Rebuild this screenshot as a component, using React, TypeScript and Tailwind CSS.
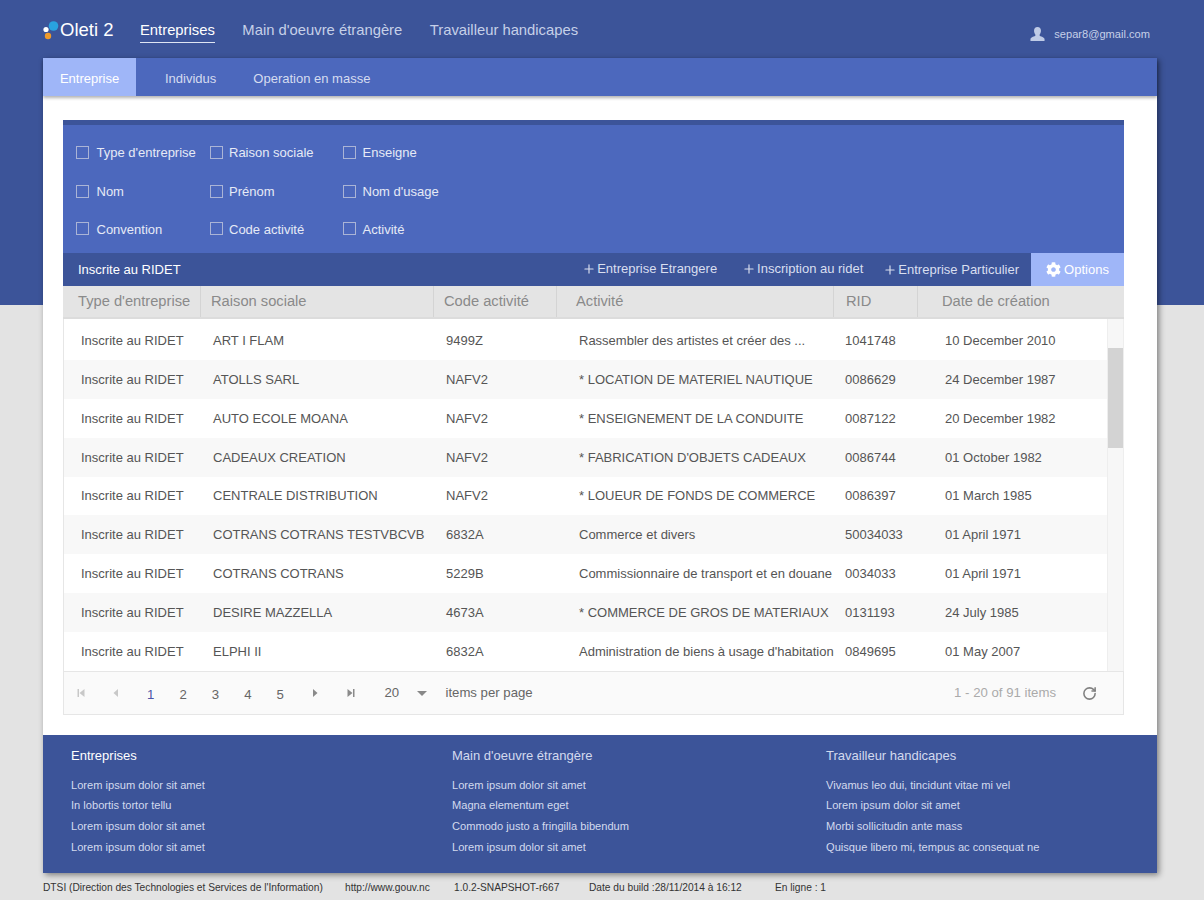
import { Plus, RotateCw } from "lucide-react";
import { FaCog } from "react-icons/fa";

const rows = [
  ["ART I FLAM", "9499Z", "Rassembler des artistes et créer des ...", "1041748", "10 December 2010"],
  ["ATOLLS SARL", "NAFV2", "* LOCATION DE MATERIEL NAUTIQUE", "0086629", "24 December 1987"],
  ["AUTO ECOLE MOANA", "NAFV2", "* ENSEIGNEMENT DE LA CONDUITE", "0087122", "20 December 1982"],
  ["CADEAUX CREATION", "NAFV2", "* FABRICATION D'OBJETS CADEAUX", "0086744", "01 October 1982"],
  ["CENTRALE DISTRIBUTION", "NAFV2", "* LOUEUR DE FONDS DE COMMERCE", "0086397", "01 March 1985"],
  ["COTRANS COTRANS TESTVBCVB", "6832A", "Commerce et divers", "50034033", "01 April 1971"],
  ["COTRANS COTRANS", "5229B", "Commissionnaire de transport et en douane", "0034033", "01 April 1971"],
  ["DESIRE MAZZELLA", "4673A", "* COMMERCE DE GROS DE MATERIAUX", "0131193", "24 July 1985"],
  ["ELPHI II", "6832A", "Administration de biens à usage d'habitation", "0849695", "01 May 2007"],
];

const filters = [
  ["Type d'entreprise", "Raison sociale", "Enseigne"],
  ["Nom", "Prénom", "Nom d'usage"],
  ["Convention", "Code activité", "Activité"],
];

const footer = [
  { title: "Entreprises", links: ["Lorem ipsum dolor sit amet", "In lobortis tortor tellu", "Lorem ipsum dolor sit amet", "Lorem ipsum dolor sit amet"] },
  { title: "Main d'oeuvre étrangère", links: ["Lorem ipsum dolor sit amet", "Magna elementum eget", "Commodo justo a fringilla bibendum", "Lorem ipsum dolor sit amet"] },
  { title: "Travailleur handicapes", links: ["Vivamus leo dui, tincidunt vitae mi vel", "Lorem ipsum dolor sit amet", "Morbi sollicitudin ante mass", "Quisque libero mi, tempus ac consequat ne"] },
];

function Logo() {
  return (
    <svg width="18" height="20" viewBox="0 0 18 20" className="shrink-0">
      <circle cx="10.5" cy="6" r="4.8" fill="#29a3e0" />
      <circle cx="3" cy="9.5" r="2.6" fill="#ffffff" />
      <circle cx="5" cy="16" r="3.2" fill="#ef9a2c" />
    </svg>
  );
}

function UserIcon() {
  return (
    <svg width="15" height="16" viewBox="0 0 16 16" className="shrink-0">
      <path d="M8 0.5c2.4 0 3.7 1.8 3.7 4.1 0 1.6-.6 3-1.4 3.8v1.5c.5.6 4.7 1.3 5.2 3.4v2.2H.5v-2.2c.5-2.1 4.7-2.8 5.2-3.400V8.400C4.900 7.600 4.300 6.200 4.300 4.600 4.300 2.300 5.600.5 8 .5z" fill="#bfcbe6" />
    </svg>
  );
}

function Pager({ d, color = "#8a8a8a" }: { d: string; color?: string }) {
  return (
    <svg width="10" height="10" viewBox="0 0 10 10">
      <path d={d} fill={color} />
    </svg>
  );
}

export default function App() {
  return (
    <div className="h-[900px] overflow-hidden bg-[linear-gradient(#3c5499_305px,#e3e3e3_305px)] font-['Liberation_Sans',Arial,sans-serif]">
      <div className="w-[1114px] ml-[43px]">
        <header className="h-[58px] flex items-start text-[#c6d0e8]">
          <div className="flex items-center mt-[17px] w-[97px]">
            <Logo />
            <span className="text-[18.5px] leading-6 text-white -ml-px mt-[1px]">Oleti 2</span>
          </div>
          <nav className="flex gap-[27.500px] mt-[18px] text-[14.800px] leading-6">
            <span className="text-white border-b border-[#dfe5f3] h-[25px]">Entreprises</span>
            <span>Main d'oeuvre étrangère</span>
            <span>Travailleur handicapes</span>
          </nav>
          <div className="ml-auto mr-[7px] mt-[26px] flex items-center gap-[9px] text-[11.100px] leading-4">
            <UserIcon />
            <span>separ8@gmail.com</span>
          </div>
        </header>

        <div className="shadow-[2px_2px_6px_rgba(0,0,0,0.45)]">
          <div className="relative h-[38px] bg-[#4c68bd] flex text-[13px] text-[#d5dcf0] shadow-[0_2px_3px_rgba(0,0,0,0.3)]">
            <div className="w-[93px] bg-[#9fb6f8] text-white flex items-center justify-center pt-[3px]">Entreprise</div>
            <div className="flex items-center ml-[29px] pt-[3px]">Individus</div>
            <div className="flex items-center ml-[37px] pt-[3px]">Operation en masse</div>
          </div>

          <main className="bg-white pl-5 pr-[33px] pt-6 pb-5">
            <div className="border-t-[5px] border-[#3c5499] bg-[#4c68bd] h-[133px] pt-[8.400px] pl-[13px] text-[13px] text-[#e6eaf6]">
              {filters.map((row, i) => (
                <div key={i} className="flex h-[38.600px] items-center">
                  {row.map((label, j) => (
                    <div key={label} className="flex items-center w-[133.500px]">
                      <span className={i === 2 ? "w-[13px] h-[13px] border border-[#aab4d6] -mt-[3px]" : "w-[13px] h-[13px] border border-[#aab4d6]"} />
                      <span className={j === 0 ? "ml-[7.500px] whitespace-nowrap" : "ml-[6.500px] whitespace-nowrap"}>{label}</span>
                    </div>
                  ))}
                </div>
              ))}
            </div>

            <div className="h-[33px] bg-[#3c5499] flex items-center text-[13px] text-[#d9dff0]">
              <span className="ml-[15px] text-white">Inscrite au RIDET</span>
              <div className="ml-auto flex items-center h-full">
                <span className="flex items-center gap-[1px] mr-[25px] -mt-[1px]"><Plus size={14} strokeWidth={2} />Entreprise Etrangere</span>
                <span className="flex items-center gap-[1px] mr-[20px] -mt-[1px]"><Plus size={14} strokeWidth={2} />Inscription au ridet</span>
                <span className="flex items-center gap-[1px] mr-[12px] mt-[1px]"><Plus size={14} strokeWidth={2} />Entreprise Particulier</span>
                <span className="w-[93px] h-full bg-[#9fb6f8] text-white flex items-center justify-center gap-[3px]"><FaCog size={15} />Options</span>
              </div>
            </div>

            <div className="h-[33px] bg-[#e4e4e4] border-b-2 border-[#dcdcdc] grid grid-cols-[138px_233px_123px_277px_84px_206px] text-[14.700px] text-[#8a8a8a]">
              <div className="pl-[15px] leading-[30px] border-r border-[#d4d4d4] whitespace-nowrap overflow-hidden">Type d'entreprise</div>
              <div className="pl-[10px] leading-[30px] border-r border-[#d4d4d4]">Raison sociale</div>
              <div className="pl-[10px] leading-[30px] border-r border-[#d4d4d4]">Code activité</div>
              <div className="pl-[19px] leading-[30px] border-r border-[#d4d4d4]">Activité</div>
              <div className="pl-[12px] leading-[30px] border-r border-[#d4d4d4]">RID</div>
              <div className="pl-[24px] leading-[30px]">Date de création</div>
            </div>

            <div className="flex h-[352px] border-l border-[#e6e6e6]">
              <div className="flex-1 pt-[2.500px] text-[13px] text-[#555555]">
                {rows.map((r, i) => (
                  <div key={r[0]} className={i % 2 === 1 ? "h-[38.800px] bg-[#f8f8f8] grid grid-cols-[136px_233px_146px_266px_100px_1fr] items-center" : "h-[38.800px] bg-white grid grid-cols-[136px_233px_146px_266px_100px_1fr] items-center"}>
                    <span className="pl-[17px] whitespace-nowrap">Inscrite au RIDET</span>
                    <span className="pl-[13px] whitespace-nowrap">{r[0]}</span>
                    <span className="pl-[13px]">{r[1]}</span>
                    <span className="whitespace-nowrap">{r[2]}</span>
                    <span>{r[3]}</span>
                    <span className="whitespace-nowrap">{r[4]}</span>
                  </div>
                ))}
              </div>
              <div className="w-[17px] bg-[#f7f7f7] border-x border-[#eeeeee] pt-[29px]">
                <div className="h-[100px] bg-[#d3d3d3]" />
              </div>
            </div>

            <div className="h-[44px] bg-[#fafafa] border border-[#e6e6e6] flex items-center text-[13.200px] text-[#666666]">
              <div className="w-[34px] flex justify-center"><Pager d="M1.500 1h1.500v8H1.500zM8.500 1v8L3.500 5z" color="#c8c8c8" /></div>
              <div className="w-[36.500px] flex justify-center"><Pager d="M7 1v8L2.500 5z" color="#c8c8c8" /></div>
              <div className="w-[32.400px] flex justify-center mt-[3px] text-[#4c55a8]">1</div>
              <div className="w-[32.400px] flex justify-center mt-[3px]">2</div>
              <div className="w-[32.400px] flex justify-center mt-[3px]">3</div>
              <div className="w-[32.400px] flex justify-center mt-[3px]">4</div>
              <div className="w-[32.400px] flex justify-center mt-[3px]">5</div>
              <div className="w-[38px] flex justify-center"><Pager d="M3 1v8L7.500 5z" /></div>
              <div className="w-[34px] flex justify-center"><Pager d="M1.500 1v8L6.500 5zM7 1h1.500v8H7z" /></div>
              <span className="ml-[16px] w-[31px] -mt-[1px]">20</span>
              <svg width="10" height="5" viewBox="0 0 10 5" className="ml-[2px]"><path d="M0 0h10L5 5z" fill="#888888" /></svg>
              <span className="ml-[18px] -mt-[1px]">items per page</span>
              <span className="ml-auto -mt-px text-[#aaaaaa]">1 - 20 of 91 items</span>
              <RotateCw size={15} strokeWidth={2.5} className="ml-[26px] mr-[26px] text-[#808080]" />
            </div>
          </main>

          <footer className="h-[138px] bg-[#3c5499] pl-[28px] pt-[13px] flex text-[#d3daee]">
            {footer.map((col, i) => (
              <div key={col.title} className={i === 0 ? "w-[381px]" : i === 1 ? "w-[374px]" : "flex-1"}>
                <div className={i === 0 ? "text-[13px] leading-4 text-white" : "text-[13px] leading-4"}>{col.title}</div>
                <div className="mt-[11px] text-[11.100px] leading-[14px] flex flex-col">
                  <span className="h-[19px] flex items-center">{col.links[0]}</span>
                  <span className="h-[21px] flex items-center">{col.links[1]}</span>
                  <span className="h-[21px] flex items-center">{col.links[2]}</span>
                  <span className="h-[21px] flex items-center">{col.links[3]}</span>
                </div>
              </div>
            ))}
          </footer>
        </div>

        <div className="flex h-[28px] pt-[1px] items-center text-[10.200px] text-[#333333] whitespace-nowrap">
          <span className="w-[302px]">DTSI (Direction des Technologies et Services de l'Information)</span>
          <span className="w-[109px]">http://www.gouv.nc</span>
          <span className="w-[135px]">1.0.2-SNAPSHOT-r667</span>
          <span className="w-[186px]">Date du build :28/11/2014 à 16:12</span>
          <span>En ligne : 1</span>
        </div>
      </div>
    </div>
  );
}
